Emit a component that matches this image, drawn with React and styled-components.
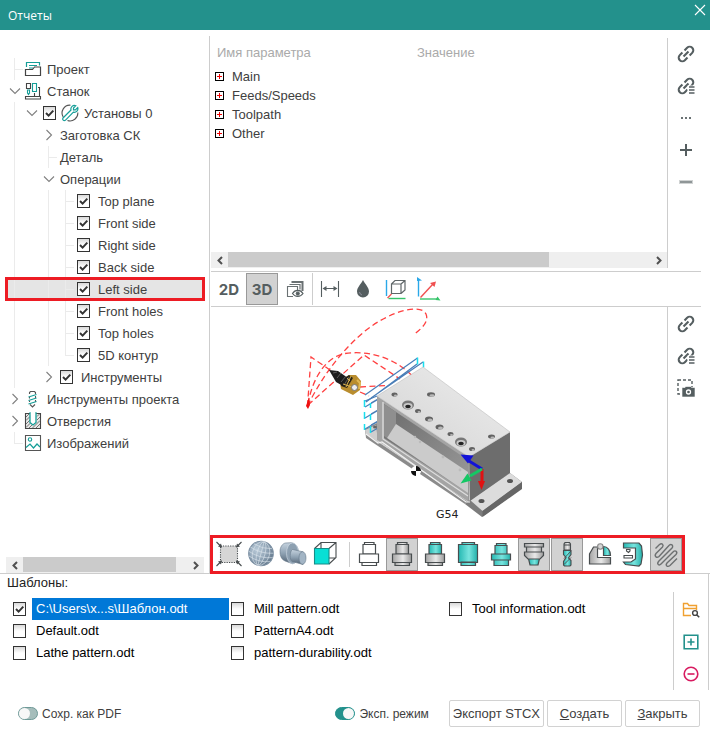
import { useState } from "react";
import styled, { createGlobalStyle } from "styled-components";

const GlobalStyle = createGlobalStyle`
  * {
    box-sizing: border-box;
  }
  body {
    margin: 0;
    background-color: white;
    color: #404040;
    font-family: "Liberation Sans", Arial, sans-serif;
    font-size: 13px;
  }
  button, input {
    font: inherit;
    color: inherit;
    margin: 0;
  }
  svg {
    display: block;
    flex-shrink: 0;
  }
`;

const LINE = "#cdcdcd";
const TEAL = "#23918c";
const DARK = "#555e60";

const Window = styled.div`
  min-height: 100vh;
  display: flex;
  flex-direction: column;
`;

const TitleBar = styled.header`
  height: 30px;
  padding-left: 8px;
  display: flex;
  align-items: center;
  justify-content: space-between;
  background-color: ${TEAL};
  color: white;
`;

const Title = styled.h1`
  margin: 0;
  font-family: "Open Sans", "Noto Sans", sans-serif;
  font-size: 12px;
  font-weight: 400;
`;

const CloseButton = styled.button`
  width: 20px;
  height: 20px;
  padding: 0;
  border: none;
  background: none;
  align-self: flex-start;
  display: grid;
  place-items: center;
`;

const Main = styled.main`
  display: grid;
  grid-template-columns: 210px minmax(0, 1fr);
  border-bottom: 1px solid ${LINE};
`;

/* ---------- tree ---------- */

const TreePane = styled.nav`
  padding: 22px 5px 0 6px;
  margin-top: 6px;
  border-right: 1px solid ${LINE};
  display: flex;
  flex-direction: column;
  justify-content: space-between;
`;

const Tree = styled.ul`
  margin: 0;
  padding: 0;
  list-style: none;
`;

const TreeRow = styled.li`
  height: 22px;
  display: flex;
  align-items: center;
  background-color: ${(p) => (p.$selected ? "#e5e5e5" : "transparent")};
  outline: ${(p) => (p.$selected ? "3px solid #ed1c24" : "none")};
  outline-offset: -2px;
`;

const Guide = styled.span`
  width: 17px;
  height: 22px;
  flex-shrink: 0;
  background-repeat: no-repeat;
  background-image: linear-gradient(#ebebeb, #ebebeb), linear-gradient(#ebebeb, #ebebeb);
  background-position: 8px 0, 8px 11px;
  background-size: ${(p) =>
    ({
      line: "1px 22px, 0 0",
      tee: "1px 22px, 9px 1px",
      end: "1px 11px, 9px 1px",
      none: "0 0, 0 0",
    })[p.$kind]};
`;

const Twisty = styled.button`
  width: 17px;
  height: 22px;
  padding: 0;
  border: none;
  background: none;
  display: grid;
  place-items: center;
`;

const NodeLabel = styled.label`
  display: flex;
  align-items: center;
  padding-left: 3px;
  gap: ${(p) => (p.$tight ? 5 : 8)}px;
  white-space: nowrap;
`;

const NodeIcon = styled.span`
  display: flex;
  margin: ${(p) => (p.$checked ? "0" : "0 -3px 0 -2px")};
`;

const CheckBox = styled.input`
  appearance: none;
  width: 13px;
  height: 14px;
  flex-shrink: 0;
  border: 1px solid #333;
  background: linear-gradient(#d9d9d9, white 50%);
  &:checked {
    background:
      url("data:image/svg+xml,%3Csvg xmlns='http://www.w3.org/2000/svg' viewBox='0 0 11 12'%3E%3Cpath d='M2 6l2.6 2.6L9.3 3.6' fill='none' stroke='%23333' stroke-width='2'/%3E%3C/svg%3E"),
      linear-gradient(#d9d9d9, white 50%);
  }
`;

/* ---------- scroll bars ---------- */

const ScrollBar = styled.div`
  height: 16px;
  display: grid;
  grid-template-columns: 17px 1fr 17px;
  background-color: #efefef;
`;

const ScrollArrow = styled.button`
  padding: 0;
  border: none;
  background: none;
  display: grid;
  place-items: center;
`;

const Thumb = styled.div`
  width: ${(p) => p.$size}%;
  height: 15px;
  background-color: #cbcbcb;
`;

/* ---------- right side ---------- */

const Workspace = styled.div`
  padding-top: 8px;
  display: flex;
  flex-direction: column;
`;

const Split = styled.section`
  display: grid;
  grid-template-columns: minmax(0, 1fr) 42px;
`;

const ParamsPane = styled.div`
  height: 230px;
  padding-left: 1px;
  border-right: 1px solid ${LINE};
  display: flex;
  flex-direction: column;
  justify-content: space-between;
`;

const ParamTable = styled.table`
  width: 100%;
  border-collapse: collapse;
  table-layout: fixed;
  font-size: 13px;
  th,
  td {
    padding: 0;
    text-align: left;
  }
  th {
    height: 29px;
    padding-left: 6px;
    color: #aaa;
    font-weight: 400;
  }
  th:first-child {
    width: 200px;
  }
  td {
    height: 19px;
  }
`;

const ParamName = styled.div`
  display: flex;
  align-items: center;
  gap: 8px;
  padding-left: 4px;
`;

const Expander = styled.button`
  width: 9px;
  height: 9px;
  padding: 0;
  border: 1px solid black;
  background: white;
  display: flex;
  align-items: center;
  justify-content: center;
`;

const SideTools = styled.div`
  display: flex;
  flex-direction: column;
  align-items: center;
  padding-top: ${(p) => p.$top || 0}px;
  padding-right: ${(p) => p.$right || 0}px;
`;

const SideButton = styled.button`
  width: 32px;
  height: 32px;
  padding: 0;
  border: none;
  background: none;
  display: grid;
  place-items: center;
`;

const ViewBar = styled.div`
  height: 36px;
  margin: 3px 9px 0 1px;
  padding: 1px 2px;
  border-top: 1px solid ${LINE};
  border-bottom: 1px solid ${LINE};
  display: flex;
  gap: 1px;
`;

const ToolButton = styled.button`
  width: 32px;
  height: ${(p) => p.$height || 32}px;
  padding: 0;
  border: 1px solid ${(p) => (p.$active ? "#999" : "transparent")};
  background-color: ${(p) => (p.$active ? "#d2d2d2" : "transparent")};
  color: ${DARK};
  font-family: Inter, "Open Sans", sans-serif;
  font-size: 15px;
  font-weight: 700;
  display: grid;
  place-items: center;
`;

const Divider = styled.span`
  width: 1px;
  background-color: ${LINE};
`;

const ModelDivider = styled(Divider)`
  margin: 4px 3px 4px 8px;
`;

const ViewPane = styled.div`
  height: 228px;
  border-right: 1px solid ${LINE};
`;

const Scene = styled.svg`
  width: 100%;
  height: 100%;
`;

const ModelBar = styled.div`
  align-self: flex-start;
  margin-bottom: -1px;
  border: 3px solid #ed1c24;
  background-color: white;
  display: flex;
`;

const ToolGroup = styled.div`
  display: flex;
  gap: ${(p) => p.$gap}px;
`;

/* ---------- templates ---------- */

const Templates = styled.section`
  display: grid;
  grid-template-columns: minmax(0, 1fr) 34px;
  margin-right: 1px;
  border-right: 1px solid ${LINE};
`;

const TemplatesTitle = styled.h2`
  margin: 0;
  padding-left: 7px;
  grid-column: 1 / -1;
  font-size: 13px;
  font-weight: 400;
  line-height: 18px;
  color: #222;
`;

const TemplateList = styled.ul`
  margin: 0;
  padding: 6px 4px 0 13px;
  list-style: none;
  border-right: 1px solid ${LINE};
  display: grid;
  grid-template-columns: repeat(3, minmax(0, 218px));
  grid-template-rows: repeat(3, 22px);
  grid-auto-flow: column;
`;

const TemplateItem = styled.label`
  display: flex;
  align-items: center;
  gap: 6px;
  height: 22px;
  padding-right: 2px;
  white-space: nowrap;
  color: ${(p) => (p.$selected ? "white" : "black")};
  span {
    flex: 1;
    padding-left: 4px;
    line-height: 22px;
    background-color: ${(p) => (p.$selected ? "#0078d7" : "transparent")};
  }
`;

/* ---------- footer ---------- */

const Footer = styled.footer`
  padding: 10px 10px 10px 18px;
  display: flex;
  align-items: center;
  justify-content: space-between;
`;

const FooterActions = styled.div`
  display: flex;
  align-items: center;
  gap: 3px;
`;

const SwitchLabel = styled.label`
  display: flex;
  align-items: center;
  gap: 4px;
  padding-right: 17px;
  font-size: 12px;
`;

const Switch = styled.input`
  appearance: none;
  width: 20px;
  height: 13px;
  border: 1px solid #6f9a98;
  border-radius: 7px;
  background-color: #a5bdbb;
  display: flex;
  justify-content: flex-start;
  &::before {
    content: "";
    width: 11px;
    height: 11px;
    border-radius: 50%;
    background-color: #f7f7f7;
  }
  &:checked {
    justify-content: flex-end;
    background-color: ${TEAL};
    border-color: ${TEAL};
  }
`;

const Button = styled.button`
  min-width: 75px;
  height: 27px;
  padding: 0 3px;
  border: 1px solid #d2d2d2;
  border-radius: 2px;
  background-color: white;
  font-size: 13px;
  white-space: nowrap;
`;

/* ---------- small icons ---------- */

const Chevron = ({ open }) => (
  <svg width="12" height="12" viewBox="0 0 12 12" fill="none" stroke="#808080" strokeWidth="1.1">
    <path d={open ? "M1 3.5l5 5 5-5" : "M3.5 1l5 5-5 5"} />
  </svg>
);

const Arrow = ({ right }) => (
  <svg width="8" height="9" viewBox="0 0 8 9" fill="none" stroke="#505050" strokeWidth="2">
    <path d={right ? "M2 1l3.5 3.5L2 8" : "M6 1L2.5 4.5 6 8"} />
  </svg>
);

const LinkIcon = ({ list }) => (
  <svg width="18" height="18" viewBox="0 0 18 18" fill="none" stroke={DARK} strokeWidth="2.1">
    <g transform="translate(9 9) rotate(-45)">
      <path d="M-1.5-3.6H-5.2A3.6 3.6 0 0 0-5.2 3.6H-1.5M1.5-3.6H5.2A3.6 3.6 0 0 1 5.2 3.6H1.5M-3.5 0H3.5" />
    </g>
    {list && (
      <>
        <path d="M10.5 8.5h8v9.5h-8z" fill="white" stroke="none" />
        <path d="M12 10h5.5M12 13h5.5M12 16h5.5" strokeWidth="1.4" />
      </>
    )}
  </svg>
);

const DotsIcon = () => (
  <svg width="12" height="4" viewBox="0 0 12 4" fill="#6a7274">
    <path d="M1 1h2v2H1zM5 1h2v2H5zM9 1h2v2H9z" />
  </svg>
);

const PlusIcon = () => (
  <svg width="14" height="14" viewBox="0 0 14 14" stroke={DARK} strokeWidth="2">
    <path d="M7 1v12M1 7h12" />
  </svg>
);

const MinusIcon = () => (
  <svg width="14" height="4" viewBox="0 0 14 4">
    <path d="M0 0h14v4H0z" fill="#d0d3d3" />
    <path d="M1 1h12v2H1z" fill="#8f9697" />
  </svg>
);

const SnapshotIcon = () => (
  <svg width="20" height="20" viewBox="0 0 20 20">
    <path d="M2 2h14v14H2z" fill="none" stroke={DARK} strokeWidth="1.4" strokeDasharray="3 2" />
    <path d="M6 9.5h3l1-1h4.5l1 1H19V19H6z" fill={DARK} stroke="white" strokeWidth=".6" />
    <circle cx="12.5" cy="14" r="2" fill={DARK} stroke="white" strokeWidth="1.3" />
  </svg>
);

const ProjectIcon = () => (
  <svg width="18" height="18" viewBox="0 0 18 18" fill="none">
    <path d="M2.5 7V2.5h13v3M5 5.5h8M5 8h4" stroke="#159e98" strokeWidth="1.2" />
    <path d="M1.5 15.5v-6h7l2-2.5h6v8.5z" stroke="#444" strokeWidth="1.2" />
  </svg>
);

const MachineIcon = () => (
  <svg width="18" height="18" viewBox="0 0 18 18" fill="none" strokeWidth="1.1">
    <path d="M2.5 1.5h4v5h-4z" stroke="#444" />
    <path d="M8.5 1.5h4v8h-4zM3.5 8v3l1 1.5 1-1.5V8z" stroke="#159e98" />
    <path d="M10.5 11v3M15.5 5v9M14 5.5h2M1.5 14.5h15v2.5h-15z" stroke="#444" />
  </svg>
);

const SetupIcon = () => (
  <svg width="18" height="18" viewBox="0 0 18 18" fill="none">
    <path d="M9.5 1.2A7.8 7.8 0 0 0 2.2 13M6.5 16.5A7.8 7.8 0 0 0 16.8 8.5" stroke="#555" strokeWidth="1.1" />
    <path
      d="M14.8 1.7L12.5 4v1.8h1.9L16.7 3.5c.9 2.6-1.4 5.3-4.3 4.7L4.3 16.3c-1.5 1-3.3-.7-2.3-2.3L10 6c-.8-2.8 2-5.4 4.800-4.300z"
      stroke="#159e98"
      strokeWidth="1.2"
    />
  </svg>
);

const DrillIcon = () => (
  <svg width="18" height="18" viewBox="0 0 18 18" fill="none">
    <path d="M5.5 4V2.5l1-1h4l1 1V4M5.5 7v1.5M11.5 6v2M5.5 10.5V12M11.5 10v2M6 14.500L8.500 17l2.500-2.500" stroke="#555" strokeWidth="1.1" />
    <path d="M4.5 7l8-2.500M4.500 10.500l8-2.500M4.500 14l8-2.500" stroke="#159e98" strokeWidth="1.2" />
  </svg>
);

const HoleIcon = () => (
  <svg width="18" height="18" viewBox="0 0 18 18">
    <path d="M1.5 1.5h15v15h-15z" fill="#e8e8e8" stroke="#444" strokeWidth="1.1" />
    <path d="M2 5l3-3M2 8.5l4-4M2 12l4-4M2 15.5l5-5M5 16l4-4M8.5 16l7.5-7.5M12 16l4-4M13 8l3-3M13 4.5l2.500-2.500" stroke="#666" strokeWidth=".9" />
    <path d="M6 1v9.500L9 13l3-2.500V1z" fill="white" stroke="#159e98" strokeWidth="1.3" />
    <path d="M6.700 0h4.600v2.200H6.700z" fill="white" />
  </svg>
);

const ImageIcon = () => (
  <svg width="18" height="18" viewBox="0 0 18 18" fill="none">
    <path d="M1.5 1.5h15v15h-15z" stroke="#555" strokeWidth="1.1" />
    <path d="M2 13.5l4-3.5 3.5 4 3.5-4 3 3" stroke="#159e98" strokeWidth="1.2" />
    <circle cx="6" cy="5.5" r="1.7" stroke="#159e98" strokeWidth="1.1" />
  </svg>
);

const OpenFolderIcon = () => (
  <svg width="18" height="18" viewBox="0 0 18 18" fill="none">
    <path d="M9 14.5H1.5V2.5h4l1.5 2h7.500V9M1.500 7.500h13" stroke="#f0a030" strokeWidth="1.4" />
    <circle cx="13" cy="12" r="2.400" stroke="#444" strokeWidth="1.4" />
    <path d="M14.700 13.700l2.500 2.500" stroke="#444" strokeWidth="1.6" />
  </svg>
);

const AddIcon = () => (
  <svg width="16" height="16" viewBox="0 0 16 16" fill="none" stroke={TEAL} strokeWidth="1.6">
    <path d="M1.2 1.2h13.6v13.6H1.2zM8 4.5v7M4.5 8h7" />
  </svg>
);

const RemoveIcon = () => (
  <svg width="16" height="16" viewBox="0 0 16 16" fill="none" stroke="#d81b60" strokeWidth="1.6">
    <circle cx="8" cy="8" r="6.8" />
    <path d="M4.5 8h7" />
  </svg>
);

/* ---------- view toolbar icons ---------- */

const LayersIcon = () => (
  <svg width="20" height="20" viewBox="0 0 20 20" fill="none" stroke="#6a7173">
    <path d="M6.5 3h11v9" strokeWidth="2" />
    <path d="M4.5 5.5h10.5v5" strokeWidth="1.2" />
    <path d="M8 17.5H2.5v-10h10V11" strokeWidth="1.1" />
    <path d="M7.5 14.5c2.5-4.200 8-4.200 10.500 0-2.500 3.800-8 3.800-10.500 0z" fill="white" stroke={DARK} strokeWidth="1.2" />
    <circle cx="12.800" cy="14.500" r="1.600" fill={DARK} stroke={DARK} />
  </svg>
);

const WidthIcon = () => (
  <svg width="20" height="18" viewBox="0 0 20 18" fill="none" stroke={DARK}>
    <path d="M1.5 1v16M18.500 1v16M4 8.500h12" strokeWidth="1.1" />
    <path d="M2.500 8.500L6.500 6v5zM17.500 8.500l-4-2.500v5z" fill={DARK} stroke="none" />
  </svg>
);

const DropIcon = () => (
  <svg width="14" height="18" viewBox="0 0 14 18">
    <path d="M7 0c2 4 6 7.5 6 11.5a6 6 0 0 1-12 0C1 7.5 5 4 7 0z" fill={DARK} />
    <path d="M3.5 12a3.5 3.5 0 0 0 2.5 3" fill="none" stroke="#99a" strokeWidth=".8" />
  </svg>
);

const BoxAxesIcon = () => (
  <svg width="22" height="22" viewBox="0 0 22 22" fill="none">
    <path d="M1.5 2v16" stroke="#2aa8e8" strokeWidth="1.4" />
    <path d="M3.5 20.5h17" stroke="#35c46a" strokeWidth="1.4" />
    <path d="M2.5 20l4-4" stroke="#f05050" strokeWidth="1.2" />
    <path d="M6.5 6h9.5v9.5H6.5zM6.5 6L10 2.5h10V12l-4 3.5M16 6l4-3.5" stroke="#606769" strokeWidth="1.2" />
  </svg>
);

const AxesIcon = () => (
  <svg width="24" height="24" viewBox="0 0 24 24" fill="none" strokeWidth="1.4">
    <path d="M1.5 19.5V3" stroke="#2aa8e8" />
    <path d="M0 0l5 3.5L0 4z" fill="#2aa8e8" />
    <path d="M3 22h18" stroke="#35c46a" />
    <path d="M20.5 19.5l3 4-5-.5z" fill="#35c46a" />
    <path d="M3.5 20.5L16 7" stroke="#f05050" />
    <path d="M13 6l6-1.5-1.5 5.5z" fill="#f05050" />
  </svg>
);

/* ---------- model toolbar icons, all on the 32x33 button grid ---------- */

const ToolSvg = ({ children }) => (
  <svg width="30" height="31" viewBox="1 1 30 31" fill="none" stroke="#484d4f" strokeWidth="1.1">
    {children}
  </svg>
);

const SharedGradients = () => (
  <svg width="0" height="0" aria-hidden="true">
    <defs>
      <linearGradient id="steel">
        <stop offset="0" stopColor="#a5a5a5" />
        <stop offset=".55" stopColor="#e9e9e9" />
        <stop offset="1" stopColor="#9b9b9b" />
      </linearGradient>
      <linearGradient id="aqua">
        <stop offset="0" stopColor="#25b8b2" />
        <stop offset=".55" stopColor="#78e4de" />
        <stop offset="1" stopColor="#23b0aa" />
      </linearGradient>
      <linearGradient id="metal" x2="0" y2="1">
        <stop offset="0" stopColor="#c6d3df" />
        <stop offset=".5" stopColor="#8fa2b3" />
        <stop offset="1" stopColor="#526374" />
      </linearGradient>
      <radialGradient id="ball" cx=".35" cy=".35" r=".7">
        <stop offset="0" stopColor="#b9cad8" />
        <stop offset=".6" stopColor="#8ea2b4" />
        <stop offset="1" stopColor="#64798c" />
      </radialGradient>
    </defs>
  </svg>
);

const FitIcon = () => (
  <ToolSvg>
    <path d="M7.5 8h17v16.5h-17z" fill="#d6d6d6" strokeDasharray="1.2 1.2" />
    <path d="M3.5 4l5 5M28.5 4l-5 5M3.5 28l5-5M28.5 28l-5-5" />
    <path d="M9 9.5l-4-1 3-3zM23 9.5l1-4 3 3zM9 22.5l-4 1 3 3zM23 22.5l1 4 3-3z" fill="#484d4f" stroke="none" />
  </ToolSvg>
);

const SphereIcon = () => (
  <ToolSvg>
    <circle cx="16" cy="15.5" r="12.3" fill="url(#ball)" stroke="#7b8fa2" />
    <g stroke="#dbe4eb" strokeWidth=".6" transform="rotate(15 16 15.5)">
      <ellipse cx="16" cy="15.5" rx="4" ry="12" />
      <ellipse cx="16" cy="15.5" rx="8.5" ry="12" />
      <path d="M4 12q12 4 24 0M3.6 16.5q12.4 4.5 24.8 0M5 21q11 4 22 0M6.5 8q9.5 3 19 0M16 3v25" />
    </g>
  </ToolSvg>
);

const ShaftIcon = () => (
  <ToolSvg>
    <g stroke="#66798a" strokeWidth=".6">
      <path d="M8.5 5l6-.3c5 1 7.5 6 7 11.5-.4 5-3 9.5-6 9.5L8 23C4.5 21.5 3 18 3 13.5S5.5 5.5 8.500 5z" fill="url(#metal)" />
      <ellipse cx="15.5" cy="15.3" rx="6" ry="10.4" fill="#8da0b1" stroke="#d3dee7" />
      <path d="M15.5 11.5l10.500 2.300v12.700l-11-3c-2.500-2-2.500-10 .5-12z" fill="url(#metal)" />
      <ellipse cx="25.500" cy="20" rx="3.500" ry="6.300" fill="#a3b5c5" />
    </g>
  </ToolSvg>
);

const CubeIcon = () => (
  <ToolSvg>
    <path d="M5.5 10.5l6.5-6h15v15l-7 6.5M20 10.5l7-6M12 4.5V20h15" />
    <path d="M5.5 10.5H20V26H5.5z" fill="#08dfd5" stroke="#178c88" />
  </ToolSvg>
);

const HolderIcon = ({ head, body }) => (
  <ToolSvg>
    <g fill={body} strokeWidth="1.2">
      <path d="M9 24.5h14.5v3H9z" />
      <path d="M10 6.5h12.5V16H10zM11.5 4.5h9.5v2h-9.5z" fill={head} />
      <path d="M6.5 16h19v8.5h-19z" />
    </g>
  </ToolSvg>
);

const CylinderIcon = () => (
  <ToolSvg>
    <path d="M10 4.5h12.5v2H10zM9 24h14.5v3.5H9zM6.5 6.5h19v18h-19z" fill="url(#aqua)" strokeWidth="1.2" />
  </ToolSvg>
);

const FlangeIcon = () => (
  <ToolSvg>
    <path d="M10 7.5h12V16H10zM11.5 5.5h9.5v2h-9.5zM9 22h14.5v5.5H9zM6.5 16h19v6h-19z" fill="url(#aqua)" strokeWidth="1.2" />
  </ToolSvg>
);

const ConeHolderIcon = () => (
  <ToolSvg>
    <g strokeWidth="1.2">
      <path d="M10.5 20.5h11l-1.5 6.5h-8z" fill="url(#aqua)" />
      <path d="M6.5 5.5h19V9h-19zM8.5 9h15v5h-15zM6.5 14h19v3.5l-3.5 3.5H10l-3.5-3.5z" fill="url(#steel)" />
    </g>
  </ToolSvg>
);

const MillIcon = () => (
  <ToolSvg>
    <path d="M13 12V6l1-1.5h4.5l1 1.5v6zM13 7h6.5" fill="url(#steel)" />
    <path d="M12.5 12.5h7.500v4L17.500 20l2.500 2.500V27l-1 1h-5.500l-1-1v-3.500l2.500-4-2.500-3z" fill="url(#aqua)" />
    <path d="M13 20.500l7-7.500M13 26.500l7-7" strokeWidth=".9" />
  </ToolSvg>
);

const ViseIcon = () => (
  <ToolSvg>
    <path d="M5.5 26V16l4-7h4v10.5h13V26z" fill="url(#steel)" strokeWidth="1.2" />
    <path d="M19.5 8.5c4 0 7 4 7 9h-7z" fill="url(#aqua)" strokeWidth="1.2" />
    <circle cx="16.3" cy="8.500" r="2.700" fill="#d5d5d5" stroke="#888" />
  </ToolSvg>
);

const MachineBodyIcon = () => (
  <ToolSvg>
    <path d="M6.5 5H22l2.5 3 1 9-1.5 9-2 2-13.5-1.5-2-2.5H14l4.5-3V10H6.500z" fill="url(#aqua)" strokeWidth="1.2" />
    <path d="M7 17.5h8.500v2.500H7zM9.500 11.500h3.500v1.500l-1.500 1.500-2-1.500z" fill="white" />
  </ToolSvg>
);

const ToolpathIcon = () => (
  <ToolSvg>
    <path
      d="M5.5 10.5L9.5 6.5c2.5-2 4.5.5 3 2.5L6 15.5c-2 2.5.5 5 3 3L18.5 8c2.5-3 5.5-.5 3.5 2L8.5 23.5c-2 2.5.5 4.5 2.5 2.5L23 14c2.5-2.5 5 0 3 2.5L17 25c-2 2.5.5 4.5 3 2.5l7-7"
      stroke="#6d7071"
      strokeWidth="1.4"
    />
  </ToolSvg>
);

/* ---------- 3D view ---------- */

const topHoles = [
  [394.5, 394.5, 3, 2],
  [431, 394.5, 4, 2.2],
  [418, 411, 3, 2],
  [429, 419, 4, 2.5],
  [439.5, 427, 4, 2.5],
  [450.5, 434, 3, 2],
  [472, 449, 3, 2],
  [491.5, 436.5, 3.5, 2],
];

const PartView = () => (
  <Scene viewBox="210 307 457 228" role="img" aria-label="G54">
    <defs>
      <linearGradient id="top" x1="0" y1="1" x2="1" y2="0">
        <stop offset="0" stopColor="#d2d2d2" />
        <stop offset="1" stopColor="#eeeeee" />
      </linearGradient>
      <linearGradient id="pocket" x1="0" x2="1" y2="1">
        <stop offset="0" stopColor="#6c6c6c" />
        <stop offset="1" stopColor="#9a9a9a" />
      </linearGradient>
    </defs>

    <g fill="none" stroke="#ff4040" strokeWidth="1.3" strokeDasharray="6 3.5">
      <path d="M307.5 406C322 377 340 352 365 331c25-20 56-28 61-17 3 7-3 14-13 21" />
      <path d="M308 404C312 380 325 357 345 353.5c25-3.500 50 5 67 22" />
      <path d="M308 405L364 355l36 24" />
      <path d="M307.5 406L311 357l22 15" />
      <path d="M360 387l27-1.5M360 392l9 4" />
    </g>
    <path d="M306 406l3-9 1 8-2 4z" fill="#e11" />

    <path d="M365 429l12-6v18l92 61-4 2-99-66z" fill="#8b8b8b" />
    <path d="M365 430l11-5 2 16 90 59v2L366 434z" fill="#cfcfcf" />
    <path d="M470 500l40-27 12 9v6l-40 29-17-13z" fill="#7c7c7c" />
    <path d="M470 500l40-27 12 9-39.5 29z" fill="#dcdcdc" />
    <path d="M482.5 511l39.5-29v7l-39.5 28z" fill="#666" />

    <g fill="none" stroke="#4a7eb8" strokeWidth="1.2">
      <path d="M365 395l52.5-37M371 398l52-36M366 402l51-38" />
      <path d="M365 401l12-5M365 407l12-7M365 418l12-7M365 429l12-7M371 403l7-4M371 414l7-4M371 425l7-4M371 432l7-4" />
    </g>
    <path
      d="M417.5 357.5v7M423.5 361.5v6M364.5 400v7M364.5 412v7M364.5 424v6M370.5 403v5M370.5 414v6M370.5 426v7"
      fill="none"
      stroke="#19e0ee"
      strokeWidth="1.5"
    />

    <path d="M377 396l92 61v45l-92-62z" fill="#a4a4a4" />
    <path d="M384 404l84 56v33l-84-55z" fill="url(#pocket)" />
    <path d="M384 404l12 8v14l-9 12-3-2z" fill="#8f8f8f" />
    <path d="M396 424l72 48v21l-81-55z" fill="#cbcbcb" />
    <path d="M383 402v37l85 57" fill="none" stroke="#ddd" strokeWidth="1.3" />
    <path d="M366 434l12 9 4-1 84 60h4" fill="none" stroke="#f0f0f0" strokeWidth="1.2" />
    <path d="M469 457l41-25v41l-40 28z" fill="#6d6d6d" />
    <path d="M377 396l46-29 87 65-41 25z" fill="url(#top)" stroke="#b5b5b5" strokeWidth=".5" />
    <path d="M469 457v44" stroke="#8f8f8f" />

    {topHoles.map(([cx, cy, rx, ry]) => (
      <g key={`${cx}-${cy}`}>
        <ellipse cx={cx} cy={cy} rx={rx} ry={ry} fill="#626262" />
        <ellipse cx={cx + 1} cy={cy + 1} rx={rx - 1.5} ry={ry - 1} fill="#b8b8b8" />
      </g>
    ))}
    {[
      [408, 405],
      [461, 442],
    ].map(([cx, cy]) => (
      <g key={cx}>
        <ellipse cx={cx} cy={cy} rx="6" ry="4.5" fill="#777" />
        <ellipse cx={cx} cy={cy + 1} rx="4.5" ry="3" fill="#c9c9c9" />
        <ellipse cx={cx} cy={cy + 1.5} rx="2.8" ry="1.8" fill="#222" />
      </g>
    ))}
    <g fill="#bbb">
      <circle cx="415" cy="437" r="1.2" />
      <circle cx="420" cy="442" r="1.2" />
      <circle cx="443" cy="457" r="1.4" />
      <circle cx="460" cy="470" r="1.4" />
      <ellipse cx="375" cy="427" rx="2" ry="1.5" fill="#666" />
      <ellipse cx="481.5" cy="501" rx="3" ry="2" fill="#555" />
      <ellipse cx="510" cy="481" rx="3" ry="2" fill="#555" />
    </g>

    {/* coordinate triad */}
    <path d="M482 469l-13-8" stroke="#1212d8" strokeWidth="3" />
    <path d="M460.5 454.5l13 1-5.5 8z" fill="#1212d8" />
    <path d="M482 469v14" stroke="#e01212" strokeWidth="3" />
    <path d="M478 481h7l-3.5 9z" fill="#e01212" />
    <path d="M482 469l-12 7" stroke="#14c864" strokeWidth="3" />
    <path d="M460.5 483.5l7-10 4 7z" fill="#14c864" />

    {/* zero point */}
    <circle cx="416" cy="471" r="5" fill="white" />
    <path d="M416 471v-5a5 5 0 0 1 5 5zM416 471v5a5 5 0 0 1-5-5z" fill="#111" />

    {/* cutter */}
    <g>
      <path d="M343 379l6-4 7 0 5 6-1 9-7 5-12-6-1-6z" fill="#b98d2e" />
      <path d="M343 379l6-4 4 3-6 10-6-2z" fill="#2a2417" />
      <path d="M329 370l9 1 10 7-5 8-7-4z" fill="#1d1d1d" />
      <path d="M333 373l4-1M337 378l4-5M341 382l5-6M344 385l5-8" stroke="#777" strokeWidth=".7" />
      <path d="M347 378l3 3M351 376l-5 11M343 384l9 3" stroke="#d8b04e" />
      <circle cx="354.5" cy="387.5" r="3" fill="#eee" stroke="#777" />
      <path d="M357 380l3 3-1 6" fill="none" stroke="#e1b955" strokeWidth="2" />
    </g>

    <text x="436" y="518" fontFamily="DejaVu Sans, sans-serif" fontSize="11" fill="#222">
      G54
    </text>
  </Scene>
);

/* ---------- data ---------- */

const operations = ["Top plane", "Front side", "Right side", "Back side", "Left side", "Front holes", "Top holes", "5D контур"];

const treeRows = [
  { text: "Проект", guides: ["tee"], icon: <ProjectIcon /> },
  { text: "Станок", guides: ["open"], icon: <MachineIcon /> },
  { text: "Установы 0", guides: ["line", "open"], check: true, icon: <SetupIcon /> },
  { text: "Заготовка СК", guides: ["line", "none", "closed"] },
  { text: "Деталь", guides: ["line", "none", "tee"] },
  { text: "Операции", guides: ["line", "none", "open"] },
  ...operations.map((text, i) => ({
    text,
    check: true,
    guides: ["line", "none", "line", i === operations.length - 1 ? "end" : "tee"],
    selected: text === "Left side",
  })),
  { text: "Инструменты", guides: ["line", "none", "closed"], check: true },
  { text: "Инструменты проекта", guides: ["closed"], icon: <DrillIcon /> },
  { text: "Отверстия", guides: ["closed"], icon: <HoleIcon /> },
  { text: "Изображений", guides: ["end"], icon: <ImageIcon /> },
];

const params = ["Main", "Feeds/Speeds", "Toolpath", "Other"];

const templates = [
  "C:\\Users\\x...s\\Шаблон.odt",
  "Default.odt",
  "Lathe pattern.odt",
  "Mill pattern.odt",
  "PatternA4.odt",
  "pattern-durability.odt",
  "Tool information.odt",
];

const modelTools = [
  { icon: <HolderIcon head="white" body="white" /> },
  { icon: <HolderIcon head="url(#steel)" body="url(#steel)" />, active: true },
  { icon: <HolderIcon head="url(#aqua)" body="url(#steel)" /> },
  { icon: <CylinderIcon /> },
  { icon: <FlangeIcon /> },
  { icon: <ConeHolderIcon />, active: true },
  { icon: <MillIcon />, active: true },
  { icon: <ViseIcon /> },
  { icon: <MachineBodyIcon /> },
  { icon: <ToolpathIcon />, active: true },
];

function HScroll({ size }) {
  return (
    <ScrollBar>
      <ScrollArrow>
        <Arrow />
      </ScrollArrow>
      <Thumb $size={size} />
      <ScrollArrow>
        <Arrow right />
      </ScrollArrow>
    </ScrollBar>
  );
}

function TreeNode({ text, guides, check, icon, selected }) {
  return (
    <TreeRow $selected={selected}>
      {guides.map((kind, i) =>
        kind === "open" || kind === "closed" ? (
          <Twisty key={i}>
            <Chevron open={kind === "open"} />
          </Twisty>
        ) : (
          <Guide key={i} $kind={kind} />
        )
      )}
      <NodeLabel as={check ? "label" : "span"} $tight={check && icon}>
        {check && <CheckBox type="checkbox" defaultChecked />}
        {icon && <NodeIcon $checked={check}>{icon}</NodeIcon>}
        <span>{text}</span>
      </NodeLabel>
    </TreeRow>
  );
}

export default function App() {
  const [mode, setMode] = useState("3D");

  return (
    <Window>
      <GlobalStyle />
      <SharedGradients />
      <TitleBar>
        <Title>Отчеты</Title>
        <CloseButton>
          <svg width="12" height="12" viewBox="0 0 12 12" stroke="white" strokeWidth="1.1">
            <path d="M1 1l10 10M11 1L1 11" />
          </svg>
        </CloseButton>
      </TitleBar>

      <Main>
        <TreePane>
          <Tree>
            {treeRows.map((row) => (
              <TreeNode key={row.text} {...row} />
            ))}
          </Tree>
          <HScroll size={93} />
        </TreePane>

        <Workspace>
          <Split>
            <ParamsPane>
              <ParamTable>
                <thead>
                  <tr>
                    <th>Имя параметра</th>
                    <th>Значение</th>
                  </tr>
                </thead>
                <tbody>
                  {params.map((name) => (
                    <tr key={name}>
                      <td>
                        <ParamName>
                          <Expander>
                            <svg width="5" height="5" viewBox="0 0 5 5" fill="#e00">
                              <path d="M2 0h1v2h2v1H3v2H2V3H0V2h2z" />
                            </svg>
                          </Expander>
                          {name}
                        </ParamName>
                      </td>
                      <td />
                    </tr>
                  ))}
                </tbody>
              </ParamTable>
              <HScroll size={76} />
            </ParamsPane>
            <SideTools $right={6}>
              <SideButton><LinkIcon /></SideButton>
              <SideButton><LinkIcon list /></SideButton>
              <SideButton><DotsIcon /></SideButton>
              <SideButton><PlusIcon /></SideButton>
              <SideButton><MinusIcon /></SideButton>
            </SideTools>
          </Split>

          <ViewBar>
            <ToolButton $active={mode === "2D"} onClick={() => setMode("2D")}>2D</ToolButton>
            <ToolButton $active={mode === "3D"} onClick={() => setMode("3D")}>3D</ToolButton>
            <ToolButton><LayersIcon /></ToolButton>
            <Divider />
            <ToolButton><WidthIcon /></ToolButton>
            <ToolButton><DropIcon /></ToolButton>
            <ToolButton><BoxAxesIcon /></ToolButton>
            <ToolButton><AxesIcon /></ToolButton>
          </ViewBar>

          <Split>
            <ViewPane>
              <PartView />
            </ViewPane>
            <SideTools $top={1} $right={6}>
              <SideButton><LinkIcon /></SideButton>
              <SideButton><LinkIcon list /></SideButton>
              <SideButton><SnapshotIcon /></SideButton>
            </SideTools>
          </Split>

          <ModelBar>
            <ToolGroup $gap={0}>
              <ToolButton $height={33}><FitIcon /></ToolButton>
              <ToolButton $height={33}><SphereIcon /></ToolButton>
              <ToolButton $height={33}><ShaftIcon /></ToolButton>
              <ToolButton $height={33}><CubeIcon /></ToolButton>
            </ToolGroup>
            <ModelDivider />
            <ToolGroup $gap={1}>
              {modelTools.map(({ icon, active }, i) => (
                <ToolButton key={i} $height={33} $active={active}>
                  {icon}
                </ToolButton>
              ))}
            </ToolGroup>
          </ModelBar>
        </Workspace>
      </Main>

      <Templates>
        <TemplatesTitle>Шаблоны:</TemplatesTitle>
        <TemplateList>
          {templates.map((name, i) => (
            <li key={name}>
              <TemplateItem $selected={i === 0}>
                <CheckBox type="checkbox" defaultChecked={i === 0} />
                <span>{name}</span>
              </TemplateItem>
            </li>
          ))}
        </TemplateList>
        <SideTools $top={2}>
          <SideButton><OpenFolderIcon /></SideButton>
          <SideButton><AddIcon /></SideButton>
          <SideButton><RemoveIcon /></SideButton>
        </SideTools>
      </Templates>

      <Footer>
        <SwitchLabel>
          <Switch type="checkbox" role="switch" />
          Сохр. как PDF
        </SwitchLabel>
        <FooterActions>
          <SwitchLabel>
            <Switch type="checkbox" role="switch" defaultChecked />
            Эксп. режим
          </SwitchLabel>
          <Button>Экспорт STCX</Button>
          <Button>
            <u>С</u>оздать
          </Button>
          <Button>
            <u>З</u>акрыть
          </Button>
        </FooterActions>
      </Footer>
    </Window>
  );
}
